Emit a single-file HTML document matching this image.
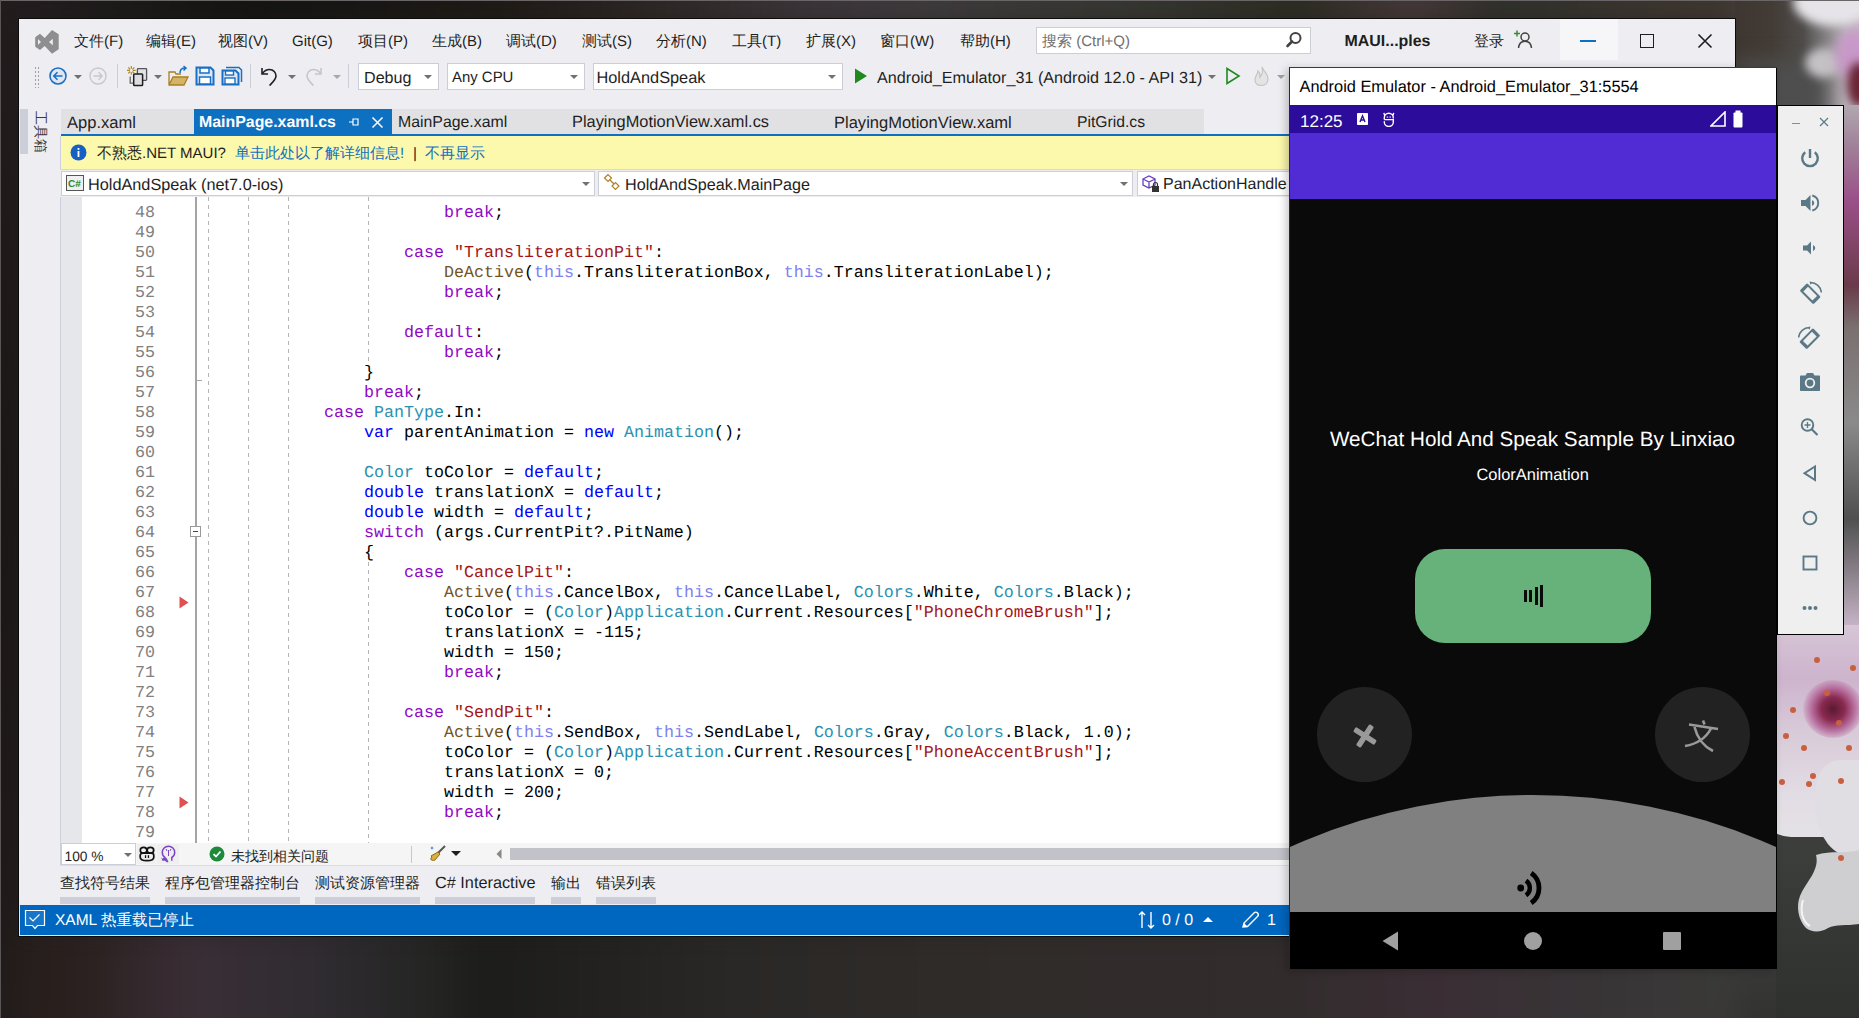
<!DOCTYPE html><html><head><meta charset="utf-8"><style>
*{margin:0;padding:0;box-sizing:border-box}
html,body{width:1859px;height:1018px;overflow:hidden}
body{position:relative;text-rendering:geometricPrecision;background:#1f1d1c;font-family:"Liberation Sans",sans-serif;font-size:16px;color:#1e1e1e}
.a{position:absolute}
.t{position:absolute;white-space:pre;line-height:1}
.code{position:absolute;font-family:"Liberation Mono",monospace;font-size:16.67px;line-height:20px;white-space:pre;color:#000}
.ln{position:absolute;font-family:"Liberation Mono",monospace;font-size:16.67px;line-height:20px;white-space:pre;color:#808080;text-align:right;width:80px}
.k{color:#8f08c4}.b{color:#0000ff}.s{color:#a31515}.ty{color:#2b91af}.m{color:#74531f}.f{color:#8080ee}.ft{color:#8cc3d6}
.cj{display:inline-block;width:1em;text-align:center;overflow:visible}
.dd{position:absolute;width:0;height:0;border-left:4px solid transparent;border-right:4px solid transparent;border-top:4px solid #717171}
</style></head><body><div class="a" style="left:0;top:0;width:1859px;height:1018px;overflow:hidden;background:#221e1e">
<div class="a" style="left:-40px;top:-40px;width:1939px;height:1098px;filter:blur(14px)">
<div class="a" style="left:0;top:0;width:1939px;height:70px;background:linear-gradient(90deg,#241e20 2%,#141412 15%,#1e1a16 27.8%,#2c2624 35.6%,#3a3438 43.3%,#3e3a3c 50%,#353530 61.4%,#2c2c22 69%,#443838 74.8%,#30302a 79.4%,#3e3630 89.7%,#3e3630 100%)"></div>
<div class="a" style="left:0;top:966px;width:1939px;height:132px;background:linear-gradient(90deg,#241e1c 0%,#2a201e 6%,#3a2e36 12%,#302c32 18%,#252524 24%,#1c1c1a 27%,#2a2826 40%,#302c2a 55%,#322c2c 68%,#3a2e34 76%,#383436 84%,#3a3a38 92%,#363634 100%)"></div>
<div class="a" style="left:0;top:0;width:60px;height:1098px;background:linear-gradient(180deg,#231c1e 0%,#1a1616 50%,#221c1a 100%)"></div>
<div class="a" style="left:1775px;top:0;width:164px;height:1098px;background:linear-gradient(180deg,#3e3630 0%,#4a4644 8%,#6a6468 20%,#7a6a76 30%,#6a6060 40%,#808080 48%,#4a4a4a 56%,#c8bcc8 66%,#d8c8d8 75%,#d0c4d0 82%,#3a3a3a 90%,#2e2e2c 100%)"></div>
</div></div>
<div class="a" style="left:1735px;top:0;width:124px;height:105px;overflow:hidden;background:linear-gradient(90deg,#3e3630 0%,#433c36 30%,#4e4c4a 55%,#8a8688 75%,#bcb4bc 90%,#c6b6c6 100%)">
<div class="a" style="left:0;top:60px;width:90px;height:60px;background:#4e4e4e;filter:blur(10px)"></div>
<div class="a" style="left:58px;top:-22px;width:80px;height:48px;border-radius:50%;background:#e6e4e8;filter:blur(5px)"></div>
<div class="a" style="left:70px;top:48px;width:38px;height:30px;border-radius:50%;background:#c4c2c4;filter:blur(5px)"></div>
<div class="a" style="left:100px;top:30px;width:40px;height:50px;border-radius:50%;background:#c898c8;filter:blur(6px)"></div>
<div class="a" style="left:112px;top:62px;width:24px;height:45px;border-radius:50%;background:#6a2434;filter:blur(5px)"></div>
</div>
<div class="a" style="left:1776px;top:105px;width:83px;height:913px;overflow:hidden"><div class="a" style="left:0;top:-105px;width:83px;height:1018px">
<div class="a" style="left:60px;top:105px;width:23px;height:530px;background:linear-gradient(180deg,#b0a8b0 0%,#a08098 8%,#9a5088 18%,#6a3a4a 34%,#7a7070 42%,#8a8a8a 60%,#505050 78%,#888088 88%,#d0bcd0 100%)"></div>
<div class="a" style="left:0;top:630px;width:83px;height:400px;background:linear-gradient(180deg,#3c3e3c 0%,#3c3e3c 55%,#343634 80%,#2e302e 100%)"></div>
<div class="a" style="left:-30px;top:625px;width:150px;height:212px;border-radius:0 0 40% 30%;background:linear-gradient(180deg,#d6c6d6 0%,#cdb4cd 25%,#d8cad8 50%,#e2dce4 80%,#e4e2e6 100%)"></div>
<div class="a" style="left:40px;top:760px;width:80px;height:98px;border-radius:30% 0 0 50%;background:#e0dee2"></div>
<svg class="a" style="left:0;top:840px" width="83" height="100" viewBox="0 0 83 100"><path d="M40 15C44 30 30 42 24 56C20 66 22 80 30 88C36 93 46 92 52 88C60 84 70 86 83 84V10C70 14 55 10 40 15Z" fill="#cfcfd2"/><path d="M27 60C24 70 26 82 34 86" fill="none" stroke="#f4f4f6" stroke-width="2"/></svg>
<div class="a" style="left:27px;top:680px;width:60px;height:58px;border-radius:50%;background:radial-gradient(circle at 50% 50%,#5a1a30 0%,#8a2a50 28%,#b870a0 52%,rgba(205,170,205,0) 75%)"></div>
<div class="a" style="left:38px;top:657px;width:6px;height:6px;border-radius:50%;background:#c86040"></div>
<div class="a" style="left:74px;top:665px;width:6px;height:6px;border-radius:50%;background:#c86040"></div>
<div class="a" style="left:7px;top:733px;width:6px;height:6px;border-radius:50%;background:#c86040"></div>
<div class="a" style="left:34px;top:773px;width:6px;height:6px;border-radius:50%;background:#c86040"></div>
<div class="a" style="left:62px;top:778px;width:6px;height:6px;border-radius:50%;background:#c86040"></div>
<div class="a" style="left:3px;top:779px;width:6px;height:6px;border-radius:50%;background:#c86040"></div>
<div class="a" style="left:14px;top:707px;width:6px;height:6px;border-radius:50%;background:#c86040"></div>
<div class="a" style="left:48px;top:690px;width:6px;height:6px;border-radius:50%;background:#c86040"></div>
<div class="a" style="left:60px;top:720px;width:6px;height:6px;border-radius:50%;background:#c86040"></div>
<div class="a" style="left:25px;top:745px;width:6px;height:6px;border-radius:50%;background:#c86040"></div>
<div class="a" style="left:70px;top:745px;width:6px;height:6px;border-radius:50%;background:#c86040"></div>
<div class="a" style="left:62px;top:855px;width:6px;height:6px;border-radius:50%;background:#c86040"></div>
<div class="a" style="left:30px;top:781px;width:6px;height:6px;border-radius:50%;background:#c86040"></div>
</div></div>
<div class="a" style="left:0;top:0;width:1859px;height:1px;background:#6a6668"></div>
<div class="a" style="left:0;top:0;width:1px;height:1018px;background:#5a5658"></div>
<div class="a" style="left:18px;top:18px;width:1718px;height:919px;background:#0c0b0b"></div>
<div class="a" style="left:19px;top:19px;width:1716px;height:917px;background:#eeeef2"></div>
<svg class="a" style="left:28px;top:24px" width="40" height="34" viewBox="0 0 40 34"><path d="M7.2 13.3L12 9.8L16.7 14L24 6L30.7 10.3V25.3L24 29.7L16.7 22L12 26L7.2 22.7Z M10 15L13 18L10 20.8Z M24.8 14.7L21 18L24.8 21.3Z" fill="#8e8e90" fill-rule="evenodd"/></svg>
<div class="t" style="left:74px;top:34.0px;font-size:15px;color:#1e1e1e;"><span class="cj">文</span><span class="cj">件</span>(F)</div>
<div class="t" style="left:146px;top:34.0px;font-size:15px;color:#1e1e1e;"><span class="cj">编</span><span class="cj">辑</span>(E)</div>
<div class="t" style="left:218px;top:34.0px;font-size:15px;color:#1e1e1e;"><span class="cj">视</span><span class="cj">图</span>(V)</div>
<div class="t" style="left:292px;top:34.0px;font-size:15px;color:#1e1e1e;">Git(G)</div>
<div class="t" style="left:358px;top:34.0px;font-size:15px;color:#1e1e1e;"><span class="cj">项</span><span class="cj">目</span>(P)</div>
<div class="t" style="left:432px;top:34.0px;font-size:15px;color:#1e1e1e;"><span class="cj">生</span><span class="cj">成</span>(B)</div>
<div class="t" style="left:506px;top:34.0px;font-size:15px;color:#1e1e1e;"><span class="cj">调</span><span class="cj">试</span>(D)</div>
<div class="t" style="left:582px;top:34.0px;font-size:15px;color:#1e1e1e;"><span class="cj">测</span><span class="cj">试</span>(S)</div>
<div class="t" style="left:656px;top:34.0px;font-size:15px;color:#1e1e1e;"><span class="cj">分</span><span class="cj">析</span>(N)</div>
<div class="t" style="left:732px;top:34.0px;font-size:15px;color:#1e1e1e;"><span class="cj">工</span><span class="cj">具</span>(T)</div>
<div class="t" style="left:806px;top:34.0px;font-size:15px;color:#1e1e1e;"><span class="cj">扩</span><span class="cj">展</span>(X)</div>
<div class="t" style="left:880px;top:34.0px;font-size:15px;color:#1e1e1e;"><span class="cj">窗</span><span class="cj">口</span>(W)</div>
<div class="t" style="left:960px;top:34.0px;font-size:15px;color:#1e1e1e;"><span class="cj">帮</span><span class="cj">助</span>(H)</div>
<div class="a" style="left:1036px;top:27px;width:275px;height:27px;background:#fff;border:1px solid #ccced7"></div>
<div class="t" style="left:1042px;top:34.0px;font-size:15px;color:#717171;"><span class="cj">搜</span><span class="cj">索</span> (Ctrl+Q)</div>
<svg class="a" style="left:1285px;top:31px" width="18" height="18" viewBox="0 0 18 18"><circle cx="10.5" cy="7" r="5" fill="none" stroke="#424242" stroke-width="2"/><path d="M7 10.5 L2.5 15" stroke="#424242" stroke-width="2.6" stroke-linecap="round"/></svg>
<div class="t" style="left:1344.5px;top:33.75px;font-size:15.96px;color:#1e1e1e;;font-weight:bold">MAUI...ples</div>
<div class="t" style="left:1474px;top:34.0px;font-size:15px;color:#1e1e1e;"><span class="cj">登</span><span class="cj">录</span></div>
<svg class="a" style="left:1512px;top:29px" width="22" height="22" viewBox="0 0 22 22"><path d="M2 4.5h6M5 1.5v6" stroke="#388a34" stroke-width="1.5"/><circle cx="13" cy="8" r="4" fill="none" stroke="#424242" stroke-width="1.5"/><path d="M6.5 19 C7 14 9.5 12.2 13 12.2 C16.5 12.2 19 14 19.5 19" fill="none" stroke="#424242" stroke-width="1.5"/></svg>
<div class="a" style="left:1560px;top:19px;width:58px;height:41px;background:#f6f6f9"></div>
<div class="a" style="left:1580px;top:40px;width:16px;height:1.5px;background:#0e70c0"></div>
<div class="a" style="left:1640px;top:34px;width:14px;height:14px;border:1.5px solid #1e1e1e"></div>
<svg class="a" style="left:1697px;top:33px" width="16" height="16" viewBox="0 0 16 16"><path d="M1.5 1.5L14.5 14.5M14.5 1.5L1.5 14.5" stroke="#1e1e1e" stroke-width="1.6"/></svg>
<div class="a" style="left:34px;top:66px;width:6px;height:22px;background-image:radial-gradient(circle,#a0a0a0 0.8px,transparent 1px);background-size:3px 4px"></div>
<svg class="a" style="left:48px;top:66px" width="20" height="20" viewBox="0 0 20 20"><circle cx="10" cy="10" r="8" fill="#dfe6f0" stroke="#1a6fc4" stroke-width="1.6"/><path d="M14.5 10H6M9.5 6.3L5.8 10L9.5 13.7" fill="none" stroke="#1a6fc4" stroke-width="1.6"/></svg>
<div class="dd" style="left:74px;top:75px;border-top-color:#6f6f6f"></div>
<svg class="a" style="left:88px;top:66px" width="20" height="20" viewBox="0 0 20 20"><circle cx="10" cy="10" r="8" fill="none" stroke="#c8c8c8" stroke-width="1.4"/><path d="M5.5 10H14M10.5 6.3L14.2 10L10.5 13.7" fill="none" stroke="#c8c8c8" stroke-width="1.4"/></svg>
<div class="a" style="left:117px;top:64px;width:1px;height:24px;background:#ccced7"></div>
<svg class="a" style="left:126px;top:65px" width="24" height="22" viewBox="0 0 24 22"><path d="M5.3 1V3.8M5.3 7V9.8M1 5.4H3.8M6.8 5.4H9.6M2.3 2.4L4.2 4.3M6.4 6.5L8.3 8.4M8.3 2.4L6.4 4.3M4.2 6.5L2.3 8.4" stroke="#b08410" stroke-width="1.1"/><rect x="11.4" y="3.6" width="9.2" height="11.8" rx="0.8" fill="#e2e2e4" stroke="#555" stroke-width="1.3"/><path d="M4.2 11.5V18.2H7.6" fill="none" stroke="#666" stroke-width="1.3"/><rect x="7.7" y="8.9" width="8.9" height="11.7" rx="0.8" fill="#dedee0" stroke="#1e1e1e" stroke-width="1.5"/></svg>
<div class="dd" style="left:154px;top:75px"></div>
<svg class="a" style="left:168px;top:65px" width="22" height="22" viewBox="0 0 22 22"><path d="M1 9V20H16L20 12H5L1 20" fill="#d5b46a" stroke="#a8801e" stroke-width="1.3"/><path d="M1 9V7H7L8 9H13" fill="none" stroke="#a8801e" stroke-width="1.3"/><path d="M12 8C12 5 14 3 17 3M15.5 1L18 3L15.5 5.5" fill="none" stroke="#1a6fc4" stroke-width="1.5"/></svg>
<svg class="a" style="left:195px;top:66px" width="20" height="20" viewBox="0 0 20 20"><path d="M1.5 1.5H15.5L18.5 4.5V18.5H1.5Z" fill="#dde8f5" stroke="#1a6fc4" stroke-width="2"/><rect x="5" y="2" width="9" height="5" fill="#fff" stroke="#1a6fc4" stroke-width="1.5"/><rect x="4.5" y="11" width="11" height="7" fill="#fff" stroke="#1a6fc4" stroke-width="1.5"/></svg>
<svg class="a" style="left:221px;top:66px" width="22" height="20" viewBox="0 0 22 20"><path d="M5 1.5H18L20.5 4V16" fill="none" stroke="#1a6fc4" stroke-width="1.5"/><path d="M1.5 4.5H14.5L17.5 7.5V18.5H1.5Z" fill="#dde8f5" stroke="#1a6fc4" stroke-width="2"/><rect x="4.5" y="5" width="8" height="4" fill="#fff" stroke="#1a6fc4" stroke-width="1.4"/><rect x="4" y="12" width="10" height="6" fill="#fff" stroke="#1a6fc4" stroke-width="1.4"/></svg>
<div class="a" style="left:250px;top:64px;width:1px;height:24px;background:#ccced7"></div>
<svg class="a" style="left:258px;top:65px" width="22" height="22" viewBox="0 0 22 22"><path d="M4 3V9H10" fill="none" stroke="#1e1e1e" stroke-width="1.6"/><path d="M4.5 8.5C6.5 5.5 9 4.5 11.5 4.5C15.5 4.5 18 7.5 18 11C18 14.5 15 17 11.5 20.5" fill="none" stroke="#1e1e1e" stroke-width="1.6"/></svg>
<div class="dd" style="left:288px;top:75px"></div>
<svg class="a" style="left:303px;top:65px" width="22" height="22" viewBox="0 0 22 22"><path d="M18 3V9H12" fill="none" stroke="#c6c6c6" stroke-width="1.6"/><path d="M17.5 8.5C15.5 5.5 13 4.5 10.5 4.5C6.5 4.5 4 7.5 4 11C4 14.5 7 17 10.5 20.5" fill="none" stroke="#c6c6c6" stroke-width="1.6"/></svg>
<div class="dd" style="left:333px;top:75px;border-top-color:#a8a8a8"></div>
<div class="a" style="left:348px;top:64px;width:1px;height:24px;background:#ccced7"></div>
<div class="a" style="left:358px;top:63px;width:81px;height:27px;background:#fff;border:1px solid #ccced7"></div>
<div class="t" style="left:364px;top:69.93px;font-size:16.12px;color:#1e1e1e;">Debug</div>
<div class="dd" style="left:424px;top:75px;border-top-color:#717171"></div>
<div class="a" style="left:447px;top:63px;width:138px;height:27px;background:#fff;border:1px solid #ccced7"></div>
<div class="t" style="left:452px;top:70.59px;font-size:14.93px;color:#1e1e1e;">Any CPU</div>
<div class="dd" style="left:570px;top:75px;border-top-color:#717171"></div>
<div class="a" style="left:593px;top:63px;width:250px;height:27px;background:#fff;border:1px solid #ccced7"></div>
<div class="t" style="left:596.5px;top:69.81px;font-size:16.34px;color:#1e1e1e;">HoldAndSpeak</div>
<div class="dd" style="left:828px;top:75px;border-top-color:#717171"></div>
<svg class="a" style="left:854px;top:68px" width="14" height="16" viewBox="0 0 14 16"><path d="M1 0.5L13 8L1 15.5Z" fill="#1e8a1e"/></svg>
<div class="t" style="left:877px;top:69.9px;font-size:16.18px;color:#1e1e1e;">Android_Emulator_31 (Android 12.0 - API 31)</div>
<div class="dd" style="left:1208px;top:75px"></div>
<svg class="a" style="left:1225px;top:67px" width="16" height="18" viewBox="0 0 16 18"><path d="M2 1.5L14 9L2 16.5Z" fill="none" stroke="#1e8a1e" stroke-width="1.6"/></svg>
<svg class="a" style="left:1252px;top:65px" width="20" height="22" viewBox="0 0 20 22"><path d="M10 2C11 6 16 8 16 14C16 18 13 20.5 9 20.5C5 20.5 3 18 3 14.5C3 11 6 9 6 6C8 8 8.5 10 8 12C10 10 11 6 10 2Z" fill="#e4e4e4" stroke="#c4c4c4" stroke-width="1.2"/></svg>
<div class="dd" style="left:1277px;top:75px;border-top-color:#a0a0a0"></div>
<div class="a" style="left:20px;top:109px;width:8px;height:45px;background:#ccced8"></div>
<div class="t" style="left:20px;top:125.0px;font-size:14px;color:#3a3a3a;transform:rotate(90deg);transform-origin:21px 7px;letter-spacing:1px"><span class="cj">工</span><span class="cj">具</span><span class="cj">箱</span></div>
<div class="a" style="left:61px;top:109px;width:1143px;height:25px;background:#e1e1e4"></div>
<div class="a" style="left:61px;top:134px;width:1229px;height:2px;background:#0e70c0"></div>
<div class="a" style="left:194px;top:109px;width:198px;height:26px;background:#0e70c0"></div>
<div class="t" style="left:67px;top:114.7px;font-size:16.55px;color:#1e1e1e;">App.xaml</div>
<div class="t" style="left:199px;top:115.06px;font-size:15.9px;color:#ffffff;;font-weight:bold">MainPage.xaml.cs</div>
<svg class="a" style="left:347px;top:115px" width="14" height="14" viewBox="0 0 14 14"><path d="M2 7H6M6 3.5V10.5M6 4H11V10H6" fill="none" stroke="#fff" stroke-width="1.2"/></svg>
<svg class="a" style="left:371px;top:116px" width="13" height="13" viewBox="0 0 13 13"><path d="M1.5 1.5L11.5 11.5M11.5 1.5L1.5 11.5" stroke="#fff" stroke-width="1.5"/></svg>
<div class="t" style="left:398px;top:115.08px;font-size:15.85px;color:#1e1e1e;">MainPage.xaml</div>
<div class="t" style="left:572px;top:114.29px;font-size:16.38px;color:#1e1e1e;">PlayingMotionView.xaml.cs</div>
<div class="t" style="left:834px;top:114.71px;font-size:16.52px;color:#1e1e1e;">PlayingMotionView.xaml</div>
<div class="t" style="left:1077px;top:115.17px;font-size:15.69px;color:#1e1e1e;">PitGrid.cs</div>
<div class="a" style="left:60px;top:136px;width:1230px;height:34px;background:#fcf8ac;border-left:1px solid #ccd0dc"></div>
<svg class="a" style="left:70px;top:144px" width="17" height="17" viewBox="0 0 17 17"><circle cx="8.5" cy="8.5" r="8" fill="#1760c2"/><rect x="7.6" y="7" width="1.8" height="6" fill="#fff"/><rect x="7.6" y="4" width="1.8" height="1.8" fill="#fff"/></svg>
<div class="t" style="left:97px;top:146.0px;font-size:15px;color:#1e1e1e;"><span class="cj">不</span><span class="cj">熟</span><span class="cj">悉</span>.NET MAUI?</div>
<div class="t" style="left:235px;top:146.0px;font-size:15px;color:#0e70c0;"><span class="cj">单</span><span class="cj">击</span><span class="cj">此</span><span class="cj">处</span><span class="cj">以</span><span class="cj">了</span><span class="cj">解</span><span class="cj">详</span><span class="cj">细</span><span class="cj">信</span><span class="cj">息</span>!</div>
<div class="t" style="left:413px;top:146.0px;font-size:15px;color:#1e1e1e;">|</div>
<div class="t" style="left:425px;top:146.0px;font-size:15px;color:#0e70c0;"><span class="cj">不</span><span class="cj">再</span><span class="cj">显</span><span class="cj">示</span></div>
<div class="a" style="left:60px;top:169px;width:1230px;height:1px;background:#d6d8e0"></div>
<div class="a" style="left:60px;top:170px;width:1230px;height:27px;background:#eeeef2"></div>
<div class="a" style="left:61px;top:171px;width:534px;height:25px;background:#fff;border:1px solid #ccced7"></div>
<svg class="a" style="left:66px;top:175px" width="18" height="16" viewBox="0 0 18 16"><rect x="0.5" y="0.5" width="17" height="15" fill="#f0f0f0" stroke="#555" stroke-width="1"/><text x="2" y="12" font-family="Liberation Sans" font-size="10" font-weight="bold" fill="#2e8b2e">C#</text></svg>
<div class="t" style="left:88px;top:176.85px;font-size:16.27px;color:#1e1e1e;">HoldAndSpeak (net7.0-ios)</div>
<div class="dd" style="left:582px;top:182px"></div>
<div class="a" style="left:598px;top:171px;width:535px;height:25px;background:#fff;border:1px solid #ccced7"></div>
<svg class="a" style="left:603px;top:173px" width="20" height="20" viewBox="0 0 20 20"><path d="M1.5 5L5 1.5L8.5 5L5 8.5Z" fill="none" stroke="#b0802a" stroke-width="1.2"/><path d="M9 13L12.5 9.5L16 13L12.5 16.5Z" fill="none" stroke="#b0802a" stroke-width="1.2"/><path d="M7 7L11 11" stroke="#b0802a" stroke-width="1.2"/></svg>
<div class="t" style="left:625px;top:176.91px;font-size:16.16px;color:#1e1e1e;">HoldAndSpeak.MainPage</div>
<div class="dd" style="left:1120px;top:182px"></div>
<div class="a" style="left:1137px;top:171px;width:153px;height:25px;background:#fff;border:1px solid #ccced7;border-right:none"></div>
<svg class="a" style="left:1141px;top:174px" width="22" height="20" viewBox="0 0 22 20"><path d="M2 5L8 2L14 5V11L8 14L2 11Z M2 5L8 8L14 5 M8 8V14" fill="none" stroke="#6a3ec2" stroke-width="1.3"/><rect x="11" y="12" width="7" height="6" fill="#333"/><path d="M12.5 12V10.5A2 2 0 0 1 16.5 10.5V12" fill="none" stroke="#333" stroke-width="1.2"/></svg>
<div class="t" style="left:1163px;top:177.0px;font-size:16px;color:#1e1e1e;">PanActionHandle</div>
<div class="a" style="left:60px;top:197px;width:1230px;height:646px;background:#fff;border-left:1px solid #ccd0dc"></div>
<div class="a" style="left:61px;top:197px;width:21px;height:646px;background:#e6e7ea"></div>
<div class="a" style="left:195px;top:197px;width:2px;height:646px;background:#a5a5a5"></div>
<div class="a" style="left:208px;top:197px;width:1px;height:646px;background-image:linear-gradient(#b4b4b4 50%,transparent 50%);background-size:1px 8px"></div>
<div class="a" style="left:248px;top:197px;width:1px;height:646px;background-image:linear-gradient(#b4b4b4 50%,transparent 50%);background-size:1px 8px"></div>
<div class="a" style="left:288px;top:197px;width:1px;height:646px;background-image:linear-gradient(#b4b4b4 50%,transparent 50%);background-size:1px 8px"></div>
<div class="a" style="left:368px;top:197px;width:1px;height:165px;background-image:linear-gradient(#b4b4b4 50%,transparent 50%);background-size:1px 8px"></div>
<div class="a" style="left:368px;top:562px;width:1px;height:281px;background-image:linear-gradient(#b4b4b4 50%,transparent 50%);background-size:1px 8px"></div>
<div class="a" style="left:0;top:0;width:1290px;height:843px;overflow:hidden">
<div class="ln" style="left:75px;top:204px">48</div>
<div class="code" style="left:444px;top:204px"><span class="k">break</span>;</div>
<div class="ln" style="left:75px;top:224px">49</div>
<div class="ln" style="left:75px;top:244px">50</div>
<div class="code" style="left:404px;top:244px"><span class="k">case</span> <span class="s">&quot;TransliterationPit&quot;</span>:</div>
<div class="ln" style="left:75px;top:264px">51</div>
<div class="code" style="left:444px;top:264px"><span class="m">DeActive</span>(<span class="f">this</span>.TransliterationBox, <span class="f">this</span>.TransliterationLabel);</div>
<div class="ln" style="left:75px;top:284px">52</div>
<div class="code" style="left:444px;top:284px"><span class="k">break</span>;</div>
<div class="ln" style="left:75px;top:304px">53</div>
<div class="ln" style="left:75px;top:324px">54</div>
<div class="code" style="left:404px;top:324px"><span class="k">default</span>:</div>
<div class="ln" style="left:75px;top:344px">55</div>
<div class="code" style="left:444px;top:344px"><span class="k">break</span>;</div>
<div class="ln" style="left:75px;top:364px">56</div>
<div class="code" style="left:364px;top:364px">}</div>
<div class="ln" style="left:75px;top:384px">57</div>
<div class="code" style="left:364px;top:384px"><span class="k">break</span>;</div>
<div class="ln" style="left:75px;top:404px">58</div>
<div class="code" style="left:324px;top:404px"><span class="k">case</span> <span class="ty">PanType</span>.In:</div>
<div class="ln" style="left:75px;top:424px">59</div>
<div class="code" style="left:364px;top:424px"><span class="b">var</span> parentAnimation = <span class="b">new</span> <span class="ty">Animation</span>();</div>
<div class="ln" style="left:75px;top:444px">60</div>
<div class="ln" style="left:75px;top:464px">61</div>
<div class="code" style="left:364px;top:464px"><span class="ty">Color</span> toColor = <span class="b">default</span>;</div>
<div class="ln" style="left:75px;top:484px">62</div>
<div class="code" style="left:364px;top:484px"><span class="b">double</span> translationX = <span class="b">default</span>;</div>
<div class="ln" style="left:75px;top:504px">63</div>
<div class="code" style="left:364px;top:504px"><span class="b">double</span> width = <span class="b">default</span>;</div>
<div class="ln" style="left:75px;top:524px">64</div>
<div class="code" style="left:364px;top:524px"><span class="k">switch</span> (args.CurrentPit?.PitName)</div>
<div class="ln" style="left:75px;top:544px">65</div>
<div class="code" style="left:364px;top:544px">{</div>
<div class="ln" style="left:75px;top:564px">66</div>
<div class="code" style="left:404px;top:564px"><span class="k">case</span> <span class="s">&quot;CancelPit&quot;</span>:</div>
<div class="ln" style="left:75px;top:584px">67</div>
<div class="code" style="left:444px;top:584px"><span class="m">Active</span>(<span class="f">this</span>.CancelBox, <span class="f">this</span>.CancelLabel, <span class="ty">Colors</span>.White, <span class="ty">Colors</span>.Black);</div>
<div class="ln" style="left:75px;top:604px">68</div>
<div class="code" style="left:444px;top:604px">toColor = (<span class="ty">Color</span>)<span class="ty">Application</span>.Current.Resources[<span class="s">&quot;PhoneChromeBrush&quot;</span>];</div>
<div class="ln" style="left:75px;top:624px">69</div>
<div class="code" style="left:444px;top:624px">translationX = -115;</div>
<div class="ln" style="left:75px;top:644px">70</div>
<div class="code" style="left:444px;top:644px">width = 150;</div>
<div class="ln" style="left:75px;top:664px">71</div>
<div class="code" style="left:444px;top:664px"><span class="k">break</span>;</div>
<div class="ln" style="left:75px;top:684px">72</div>
<div class="ln" style="left:75px;top:704px">73</div>
<div class="code" style="left:404px;top:704px"><span class="k">case</span> <span class="s">&quot;SendPit&quot;</span>:</div>
<div class="ln" style="left:75px;top:724px">74</div>
<div class="code" style="left:444px;top:724px"><span class="m">Active</span>(<span class="f">this</span>.SendBox, <span class="f">this</span>.SendLabel, <span class="ty">Colors</span>.Gray, <span class="ty">Colors</span>.Black, 1.0);</div>
<div class="ln" style="left:75px;top:744px">75</div>
<div class="code" style="left:444px;top:744px">toColor = (<span class="ty">Color</span>)<span class="ty">Application</span>.Current.Resources[<span class="s">&quot;PhoneAccentBrush&quot;</span>];</div>
<div class="ln" style="left:75px;top:764px">76</div>
<div class="code" style="left:444px;top:764px">translationX = 0;</div>
<div class="ln" style="left:75px;top:784px">77</div>
<div class="code" style="left:444px;top:784px">width = 200;</div>
<div class="ln" style="left:75px;top:804px">78</div>
<div class="code" style="left:444px;top:804px"><span class="k">break</span>;</div>
<div class="ln" style="left:75px;top:824px">79</div>
</div>
<div class="a" style="left:190px;top:526px;width:11px;height:11px;background:#fff;border:1px solid #9a9a9a"></div>
<div class="a" style="left:193px;top:531px;width:5px;height:1px;background:#444"></div>
<div class="a" style="left:196px;top:380px;width:6px;height:1px;background:#a5a5a5"></div>
<svg class="a" style="left:179px;top:596px" width="10" height="13" viewBox="0 0 10 13"><path d="M0.5 0.5L9.5 6.5L0.5 12.5Z" fill="#e05050"/></svg>
<svg class="a" style="left:179px;top:796px" width="10" height="13" viewBox="0 0 10 13"><path d="M0.5 0.5L9.5 6.5L0.5 12.5Z" fill="#e05050"/></svg>
<div class="a" style="left:60px;top:843px;width:1230px;height:23px;background:#f5f5f5;border-left:1px solid #ccd0dc"></div>
<div class="a" style="left:60px;top:865px;width:1230px;height:1px;background:#dcdde3"></div>
<div class="a" style="left:61px;top:843px;width:75px;height:22px;background:#fff;border:1px solid #ccced7"></div>
<div class="t" style="left:64.5px;top:849.68px;font-size:13.76px;color:#1e1e1e;">100 %</div>
<div class="dd" style="left:124px;top:853px"></div>
<div class="a" style="left:137px;top:844px;width:19px;height:20px;background:#efefef"></div>
<div class="a" style="left:157px;top:844px;width:22px;height:20px;background:#efefef"></div>
<svg class="a" style="left:139px;top:846px" width="16" height="16" viewBox="0 0 16 16"><ellipse cx="4.6" cy="4.3" rx="3.3" ry="2.9" fill="none" stroke="#111" stroke-width="1.7"/><ellipse cx="11.4" cy="4.3" rx="3.3" ry="2.9" fill="none" stroke="#111" stroke-width="1.7"/><path d="M1.2 9.5C1.2 7.8 2.5 7.2 4 7.2H12C13.5 7.2 14.8 7.8 14.8 9.5V11.2C14.8 13.2 12.5 14.6 8 14.6C3.5 14.6 1.2 13.2 1.2 11.2Z" fill="none" stroke="#111" stroke-width="1.7"/><rect x="5.9" y="9.2" width="1.3" height="2.8" fill="#111"/><rect x="8.8" y="9.2" width="1.3" height="2.8" fill="#111"/></svg>
<svg class="a" style="left:160px;top:845px" width="16" height="18" viewBox="0 0 16 18"><path d="M5 12.5C3.2 11.3 2.3 9.5 2.3 7.5C2.3 4 5 1.3 8.5 1.3C12 1.3 14.7 4 14.7 7.5C14.7 9.8 13.5 11.5 11.8 12.5V15.8" fill="none" stroke="#7b45c8" stroke-width="1.5"/><path d="M8.5 5V11M6 4L7 6M11 4L10 6" stroke="#7b45c8" stroke-width="1"/><path d="M1 12.2L2.6 13.8L4.8 11.6L6.8 13.6L8.5 16.8L7.2 17.4L4.6 15.4L2.6 16" fill="#7b45c8"/></svg>
<svg class="a" style="left:209px;top:846px" width="16" height="16" viewBox="0 0 16 16"><circle cx="8" cy="8" r="7.5" fill="#1c8a3a"/><path d="M4.5 8.2L7 10.5L11.5 5.5" fill="none" stroke="#fff" stroke-width="1.8"/></svg>
<div class="t" style="left:231px;top:849.0px;font-size:14px;color:#1e1e1e;"><span class="cj">未</span><span class="cj">找</span><span class="cj">到</span><span class="cj">相</span><span class="cj">关</span><span class="cj">问</span><span class="cj">题</span></div>
<div class="a" style="left:411px;top:846px;width:1px;height:17px;background:#c8c8c8"></div>
<svg class="a" style="left:429px;top:844px" width="18" height="18" viewBox="0 0 18 18"><path d="M16 2L9 9" stroke="#555" stroke-width="2"/><path d="M9 8L11 10L6 16C4 17 2 16 1.5 15L3 13L2 12Z" fill="#d9b040" stroke="#8a6a1a" stroke-width="1"/><path d="M3 2L3.6 3.4L5 4L3.6 4.6L3 6L2.4 4.6L1 4L2.4 3.4Z" fill="#3a7ad0"/></svg>
<div class="dd" style="left:451px;top:851px;border-top-color:#1e1e1e;border-left-width:5px;border-right-width:5px;border-top-width:5px"></div>
<svg class="a" style="left:495px;top:848px" width="8" height="12" viewBox="0 0 8 12"><path d="M6.5 1L1.5 6L6.5 11Z" fill="#888"/></svg>
<div class="a" style="left:510px;top:848px;width:780px;height:12px;background:#c2c3c9"></div>
<div class="a" style="left:20px;top:866px;width:1270px;height:39px;background:#eeeef2"></div>
<div class="t" style="left:60px;top:876.0px;font-size:15px;color:#1e1e1e;"><span class="cj">查</span><span class="cj">找</span><span class="cj">符</span><span class="cj">号</span><span class="cj">结</span><span class="cj">果</span></div>
<div class="a" style="left:60px;top:897px;width:90px;height:7px;background:#ccceda"></div>
<div class="t" style="left:165px;top:876.0px;font-size:15px;color:#1e1e1e;"><span class="cj">程</span><span class="cj">序</span><span class="cj">包</span><span class="cj">管</span><span class="cj">理</span><span class="cj">器</span><span class="cj">控</span><span class="cj">制</span><span class="cj">台</span></div>
<div class="a" style="left:165px;top:897px;width:135px;height:7px;background:#ccceda"></div>
<div class="t" style="left:315px;top:876.0px;font-size:15px;color:#1e1e1e;"><span class="cj">测</span><span class="cj">试</span><span class="cj">资</span><span class="cj">源</span><span class="cj">管</span><span class="cj">理</span><span class="cj">器</span></div>
<div class="a" style="left:315px;top:897px;width:105px;height:7px;background:#ccceda"></div>
<div class="t" style="left:435px;top:875.29px;font-size:16.29px;color:#1e1e1e;">C# Interactive</div>
<div class="a" style="left:435px;top:897px;width:100px;height:7px;background:#ccceda"></div>
<div class="t" style="left:551px;top:876.0px;font-size:15px;color:#1e1e1e;"><span class="cj">输</span><span class="cj">出</span></div>
<div class="a" style="left:551px;top:897px;width:30px;height:7px;background:#ccceda"></div>
<div class="t" style="left:596px;top:876.0px;font-size:15px;color:#1e1e1e;"><span class="cj">错</span><span class="cj">误</span><span class="cj">列</span><span class="cj">表</span></div>
<div class="a" style="left:596px;top:897px;width:60px;height:7px;background:#ccceda"></div>
<div class="a" style="left:19px;top:905px;width:1716px;height:31px;background:#0067c0;border-left:1px solid #e6e6ea;border-bottom:1px solid #e6e6ea"></div>
<svg class="a" style="left:24px;top:909px" width="22" height="22" viewBox="0 0 22 22"><path d="M1.5 1.5H20.5V16.5H13.5L11 19.5L8.5 16.5H1.5Z" fill="#1876c8" stroke="#fff" stroke-width="1.2"/><path d="M5.5 8.5L9 12L15.5 5.5" fill="none" stroke="#fff" stroke-width="1.2"/></svg>
<div class="t" style="left:55px;top:913.0px;font-size:15.5px;color:#ffffff;">XAML <span class="cj">热</span><span class="cj">重</span><span class="cj">载</span><span class="cj">已</span><span class="cj">停</span><span class="cj">止</span></div>
<svg class="a" style="left:1137px;top:910px" width="20" height="20" viewBox="0 0 20 20"><path d="M5 18V2M2 5L5 2L8 5M14 2V18M11 15L14 18L17 15" fill="none" stroke="#fff" stroke-width="1.4"/></svg>
<div class="t" style="left:1162px;top:913.0px;font-size:16px;color:#ffffff;">0 / 0</div>
<svg class="a" style="left:1202px;top:915px" width="12" height="8" viewBox="0 0 12 8"><path d="M1 7L6 2L11 7Z" fill="#fff"/></svg>
<svg class="a" style="left:1241px;top:911px" width="18" height="18" viewBox="0 0 18 18"><path d="M2 16L3 12L13 2C14 1 15.5 1 16.5 2C17.5 3 17.5 4.5 16.5 5.5L6.5 15.5Z" fill="none" stroke="#fff" stroke-width="1.4"/><path d="M2 16L6 15L3 12Z" fill="#fff"/></svg>
<div class="t" style="left:1267px;top:913.0px;font-size:16px;color:#ffffff;">1</div>
<div class="a" style="left:1289px;top:67px;width:488px;height:902px;box-shadow:-3px 2px 8px 0px rgba(0,0,0,0.22)"></div>
<div class="a" style="left:1289px;top:67px;width:488px;height:902px;background:#000;border-top:1px solid #3a3a3a;border-left:1px solid #2a2a2a"></div>
<div class="a" style="left:1290px;top:68px;width:486px;height:37px;background:#ffffff"></div>
<div class="t" style="left:1299.5px;top:79.02px;font-size:16.36px;color:#000000;">Android Emulator - Android_Emulator_31:5554</div>
<div class="a" style="left:1290px;top:105px;width:486px;height:28px;background:#2c0c9a"></div>
<div class="t" style="left:1300px;top:113.0px;font-size:17px;color:#ffffff;">12:25</div>
<svg class="a" style="left:1357px;top:113px" width="11" height="12" viewBox="0 0 11 12"><rect x="0" y="0" width="11" height="12" rx="0.8" fill="#fff"/><path d="M3 9L5.5 2.8L8 9M4 7H7" fill="none" stroke="#2c0c9a" stroke-width="1.4"/></svg>
<svg class="a" style="left:1383px;top:112px" width="12" height="15" viewBox="0 0 12 15"><path d="M1.3 7.6V5.8A4.5 4.5 0 0 1 10.3 5.8V6.6M1.3 7.6H10.3V10A4.5 4.5 0 0 1 1.3 10V9.2M1.6 3.4L0.9 0.9M10 3.4L10.7 0.9" fill="none" stroke="#fff" stroke-width="1.4"/><rect x="3.6" y="4.6" width="1.6" height="1" fill="#fff"/><rect x="6.4" y="4.6" width="1.6" height="1" fill="#fff"/></svg>
<svg class="a" style="left:1710px;top:111px" width="16" height="16" viewBox="0 0 16 16"><path d="M15 1V15H1Z" fill="none" stroke="#fff" stroke-width="1.6"/></svg>
<svg class="a" style="left:1732px;top:110px" width="12" height="18" viewBox="0 0 12 18"><rect x="3.5" y="0.5" width="5" height="2.5" fill="#fff"/><rect x="1.5" y="2.5" width="9" height="15" rx="1" fill="#fff"/></svg>
<div class="a" style="left:1290px;top:133px;width:486px;height:66px;background:#512bd4"></div>
<div class="a" style="left:1290px;top:199px;width:486px;height:713px;background:#0a0a0a"></div>
<div class="t" style="left:1330px;top:430.08px;font-size:20.66px;color:#ffffff;">WeChat Hold And Speak Sample By Linxiao</div>
<div class="t" style="left:1476.5px;top:467.08px;font-size:16.46px;color:#ffffff;">ColorAnimation</div>
<div class="a" style="left:1415px;top:549px;width:236px;height:94px;background:#66b27a;border-radius:30px"></div>
<div class="a" style="left:1524px;top:590px;width:3px;height:12px;background:#0a0a0a"></div>
<div class="a" style="left:1529px;top:590px;width:3px;height:12px;background:#0a0a0a"></div>
<div class="a" style="left:1535px;top:587px;width:2.5px;height:18px;background:#0a0a0a"></div>
<div class="a" style="left:1540px;top:585px;width:2.5px;height:22px;background:#0a0a0a"></div>
<div class="a" style="left:1317px;top:687px;width:95px;height:95px;border-radius:50%;background:#222222"></div>
<svg class="a" style="left:1345px;top:716px" width="40" height="40" viewBox="0 0 40 40"><g transform="rotate(33 20 20)"><rect x="7.5" y="17.2" width="25" height="5.6" rx="1.5" fill="#999"/><rect x="17.2" y="7.5" width="5.6" height="25" rx="1.5" fill="#999"/></g></svg>
<div class="a" style="left:1655px;top:687px;width:95px;height:95px;border-radius:50%;background:#222222"></div>
<svg class="a" style="left:1675px;top:705px" width="55" height="60" viewBox="0 0 55 60"><path d="M28 15.5L29.5 19.5M14 19.5L43 24M19.5 22C22 32 28 41 38 46M36 23.5C31 33 22 39 10 41" fill="none" stroke="#999" stroke-width="2.6" stroke-linecap="butt"/></svg>
<div class="a" style="left:1290px;top:795px;width:486px;height:117px;overflow:hidden"><div class="a" style="left:-351px;top:0;width:1188px;height:1188px;border-radius:50%;background:#808080"></div></div>
<svg class="a" style="left:1505px;top:860px" width="50" height="50" viewBox="0 0 50 50"><circle cx="15.7" cy="28" r="3.4" fill="#000"/><path d="M21 20.6A9 9 0 0 1 21 35.4" fill="none" stroke="#000" stroke-width="4.4"/><path d="M26.2 13A18.3 18.3 0 0 1 26.2 43" fill="none" stroke="#000" stroke-width="4.8"/></svg>
<div class="a" style="left:1290px;top:912px;width:486px;height:57px;background:#000000"></div>
<svg class="a" style="left:1380px;top:929px" width="22" height="24" viewBox="0 0 22 24"><path d="M18 2.5V21.5L2.5 12Z" fill="#a0a0a0"/></svg>
<div class="a" style="left:1524px;top:932px;width:18px;height:18px;border-radius:50%;background:#a0a0a0"></div>
<div class="a" style="left:1663px;top:932px;width:18px;height:18px;background:#a0a0a0;border-radius:1px"></div>
<div class="a" style="left:1777px;top:105px;width:67px;height:530px;background:#efefef;border:1px solid #000"></div>
<div class="a" style="left:1792px;top:122.5px;width:8px;height:1.5px;background:#7a929c"></div>
<svg class="a" style="left:1819px;top:117px" width="10" height="10" viewBox="0 0 10 10"><path d="M1 1L9 9M9 1L1 9" stroke="#5f7d8a" stroke-width="1.3"/></svg>
<svg class="a" style="left:1798px;top:146px" width="24" height="24" viewBox="0 0 24 24"><path d="M12 3V12" stroke="#5b7886" stroke-width="2.4"/><path d="M7.2 6.2A7.8 7.8 0 1 0 16.8 6.2" fill="none" stroke="#5b7886" stroke-width="2.4"/></svg>
<svg class="a" style="left:1798px;top:191px" width="24" height="24" viewBox="0 0 24 24"><path d="M3 9H7.5L12.5 4V20L7.5 15H3Z" fill="#5b7886"/><path d="M14 9C15.5 9.8 16.2 10.8 16.2 12C16.2 13.2 15.5 14.2 14 15Z" fill="#5b7886"/><path d="M14.3 4.5C18 5.5 20.2 8.5 20.2 12C20.2 15.5 18 18.5 14.3 19.5" fill="none" stroke="#5b7886" stroke-width="1.9"/></svg>
<svg class="a" style="left:1798px;top:236px" width="24" height="24" viewBox="0 0 24 24"><path d="M5 9.5H9L13 5.5V18.5L9 14.5H5Z" fill="#5b7886"/><path d="M15 9C16.5 9.8 17.2 10.8 17.2 12C17.2 13.2 16.5 14.2 15 15Z" fill="#5b7886"/></svg>
<svg class="a" style="left:1798px;top:281px" width="24" height="24" viewBox="0 0 24 24"><g transform="rotate(-45 12.2 12.7)"><rect x="6.9" y="3" width="10.6" height="19.4" rx="1.3" fill="#5b7886"/><rect x="8.9" y="6.3" width="6.6" height="12.8" fill="#efefef"/></g><path d="M12.5 1.4A11.3 11.3 0 0 1 23.4 11.5" fill="none" stroke="#5b7886" stroke-width="1.5"/><path d="M11.5 0.5L14.5 1.3L12.5 3.8Z" fill="#5b7886"/></svg>
<svg class="a" style="left:1798px;top:326px" width="24" height="24" viewBox="0 0 24 24"><g transform="rotate(45 11.8 12.7)"><rect x="6.5" y="3" width="10.6" height="19.4" rx="1.3" fill="#5b7886"/><rect x="8.5" y="6.3" width="6.6" height="12.8" fill="#efefef"/></g><path d="M11.5 1.4A11.3 11.3 0 0 0 0.6 11.5" fill="none" stroke="#5b7886" stroke-width="1.5"/><path d="M12.5 0.5L9.5 1.3L11.5 3.8Z" fill="#5b7886"/></svg>
<svg class="a" style="left:1798px;top:370px" width="24" height="24" viewBox="0 0 24 24"><path d="M3 5.5H7.5L9 3H15L16.5 5.5H21C21.6 5.5 22 5.9 22 6.5V20C22 20.6 21.6 21 21 21H3C2.4 21 2 20.6 2 20V6.5C2 5.9 2.4 5.5 3 5.5Z" fill="#5b7886"/><circle cx="12" cy="13" r="4.3" fill="none" stroke="#efefef" stroke-width="1.8"/></svg>
<svg class="a" style="left:1798px;top:416px" width="24" height="24" viewBox="0 0 24 24"><circle cx="9.5" cy="9" r="5.8" fill="none" stroke="#5b7886" stroke-width="1.9"/><path d="M13.5 13L19.5 19" stroke="#5b7886" stroke-width="2.2"/><path d="M9.5 6V12M6.5 9H12.5" stroke="#5b7886" stroke-width="1.3"/></svg>
<svg class="a" style="left:1798px;top:461px" width="24" height="24" viewBox="0 0 24 24"><path d="M17 5.5V19L6.5 12.2Z" fill="none" stroke="#5b7886" stroke-width="2" stroke-linejoin="miter"/></svg>
<svg class="a" style="left:1798px;top:506px" width="24" height="24" viewBox="0 0 24 24"><circle cx="12" cy="12" r="6.4" fill="none" stroke="#5b7886" stroke-width="1.9"/></svg>
<svg class="a" style="left:1798px;top:551px" width="24" height="24" viewBox="0 0 24 24"><rect x="5.5" y="5.5" width="13" height="13" fill="none" stroke="#5b7886" stroke-width="1.9"/></svg>
<svg class="a" style="left:1798px;top:596px" width="24" height="24" viewBox="0 0 24 24"><circle cx="6.5" cy="12" r="2" fill="#5b7886"/><circle cx="12" cy="12" r="2" fill="#5b7886"/><circle cx="17.5" cy="12" r="2" fill="#5b7886"/></svg></body></html>
